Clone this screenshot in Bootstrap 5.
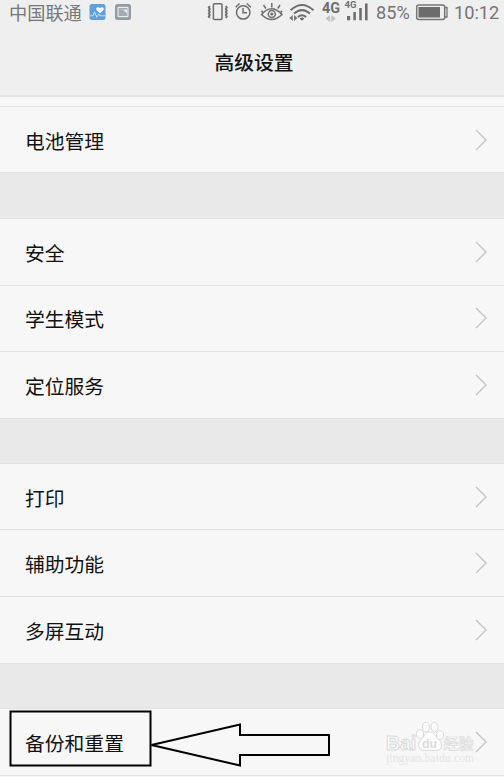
<!DOCTYPE html>
<html lang="zh-CN">
<head>
<meta charset="utf-8">
<meta name="viewport" content="width=device-width, initial-scale=1">
<title>高级设置</title>
<link href="https://cdn.jsdelivr.net/npm/bootstrap@5.3.0/dist/css/bootstrap.min.css" rel="stylesheet">
<style>
body{background:#f7f7f7;font-family:"Noto Sans CJK SC",sans-serif;color:#111;overflow:hidden}
.screen{width:504px;height:777px;overflow:hidden}
.top-area{background:#efefef;height:97px;border-bottom:2px solid #e5e5e5}
.status{height:26px;padding-left:9px;color:#777;font-size:18.2px;line-height:26px}
.status svg{flex:none}
.carrier{line-height:24px}
.num{font-family:Roboto,sans-serif;font-size:18.2px;color:#757575}
.battery-num{width:41px;padding-left:2px}
.clock{width:50px}
.page-title{font-size:19.8px;font-weight:500;line-height:30px;margin-top:21px;padding-left:4px}
.strip{height:10px;border-bottom:1px solid #e2e2e2}
.setting{height:66.6px;padding:2px 16px 0 25px;border-bottom:1px solid #e2e2e2;font-size:19.8px;line-height:30px;background:#f7f7f7}
.setting.first{height:66px}
.setting.last{height:67.4px}
.band{height:45px;background:#e9e9e9;border-bottom:1px solid #e4e4e4}
.band.first{height:46px}
.chev{width:14px;height:22px;margin-top:-2px;fill:none;stroke:#c4c4c4;stroke-width:1.4}
.annot{left:0;top:700px}
.wm{left:380px;top:715px}
</style>
</head>
<body>
<main class="screen position-relative">
<header class="top-area">
<div class="status d-flex align-items-start">
<span class="carrier">中国联通</span>
<svg width="51" height="26" viewBox="82 0 51 26">
<rect x="89.500" y="4" width="16" height="16" rx="2.500" fill="#609fdb"/>
<path d="M100 13.300l-3.400-3.300c-1.500-2.400 1.700-4 3.400-1.700 1.700-2.300 4.900-.7 3.400 1.700z" fill="#fff"/>
<path d="M90 15.800h3l1.600-4 2.200 5.500 2-3.500 1.200 2h5" fill="none" stroke="#c6e0f6"/>
<rect x="115" y="4" width="16" height="16" rx="2.500" fill="#929ba3"/>
<rect x="118" y="7.300" width="10" height="9.400" rx=".8" fill="#a3abb1" stroke="#e6e8e9" stroke-width="1.200"/>
<path d="M119.500 9.500l4 .5 3.500 3.500v-4z" fill="#e6e8e9"/>
</svg>
<svg class="ms-auto" width="170" height="26" viewBox="204 0 170 26" fill="none" stroke="#6e6e6e" stroke-width="1.500">
<rect x="213.400" y="3.800" width="8.600" height="15.600" rx="1"/>
<path d="M209.800 6l-1 1.500 1 1.500-1 1.500 1 1.500-1 1.500 1 1.500-1 1.500 1 1.500M225.800 6l1 1.500-1 1.500 1 1.500-1 1.500 1 1.500-1 1.500 1 1.500-1 1.500" stroke-width="1.900"/>
<circle cx="243.200" cy="12.400" r="6.700"/><path d="M243 8v4.800h4M235.600 7.200l4-3.700M246.800 3.500l4 3.700"/>
<path d="M261.500 14.500q10-11.500 20.500 0q-10.500 10-20.500 0z"/><circle cx="271.800" cy="14" r="3.500"/><circle cx="271.800" cy="14" r=".8" fill="#6e6e6e"/>
<path d="M271.800 7.500V3M265.800 8.500l-2.200-3.500M277.800 8.500l2.200-3.500M261.500 10.800l1.500 2M282 10.800l-1.500 2"/>
<path d="M290.500 10.200q11.500-10.500 23 0M294 13.600q8-7 16 0M297.800 17q4.200-3.600 8.400 0" stroke-width="2"/>
<path d="M302 20.800l-2.400-2.300q2.400-1.900 4.800 0z" fill="#6e6e6e" stroke="none"/>
<path d="M292.800 15v6l-3.500-3zM294 15v6l3.500-3z" fill="#777" stroke="none"/>
<path d="M330 15v7l-4.500-3.500zM331.300 15v7l4.500-3.500z" fill="#c2c2c2" stroke="none"/>
<g fill="#6e6e6e" stroke="none" font-family="Roboto" font-weight="700"><text x="322" y="13.200" font-size="15.500" textLength="18" lengthAdjust="spacingAndGlyphs">4G</text><text x="344.500" y="8" font-size="9.500" textLength="12" lengthAdjust="spacingAndGlyphs">4G</text>
<rect x="347" y="16" width="3.200" height="4.300"/><rect x="353.300" y="12" width="2.600" height="8.300"/><rect x="359.200" y="8" width="2.600" height="12.300"/><rect x="365" y="3.500" width="2.600" height="16.800"/></g>
</svg>
<span class="num battery-num">85%</span>
<svg width="39" height="26" viewBox="415 0 39 26"><rect x="416.700" y="5" width="28" height="14.500" rx="2" fill="none" stroke="#757575" stroke-width="1.500"/><path d="M445 7.500h2v9.500h-2" fill="none" stroke="#757575" stroke-width="1.300"/><rect x="418.500" y="7" width="21.500" height="10.500" fill="#6c6c6c"/></svg>
<span class="num clock">10:12</span>
</div>
<h1 class="page-title text-center mb-0">高级设置</h1>
</header>
<div class="strip"></div>
<section>
<div class="setting first d-flex align-items-center justify-content-between">电池管理<svg class="chev" viewBox="0 0 14 22"><path d="M2 1l10 10L2 21"/></svg></div>
<div class="band first"></div>
<div class="setting d-flex align-items-center justify-content-between">安全<svg class="chev" viewBox="0 0 14 22"><path d="M2 1l10 10L2 21"/></svg></div>
<div class="setting d-flex align-items-center justify-content-between">学生模式<svg class="chev" viewBox="0 0 14 22"><path d="M2 1l10 10L2 21"/></svg></div>
<div class="setting d-flex align-items-center justify-content-between">定位服务<svg class="chev" viewBox="0 0 14 22"><path d="M2 1l10 10L2 21"/></svg></div>
<div class="band"></div>
<div class="setting d-flex align-items-center justify-content-between">打印<svg class="chev" viewBox="0 0 14 22"><path d="M2 1l10 10L2 21"/></svg></div>
<div class="setting d-flex align-items-center justify-content-between">辅助功能<svg class="chev" viewBox="0 0 14 22"><path d="M2 1l10 10L2 21"/></svg></div>
<div class="setting d-flex align-items-center justify-content-between">多屏互动<svg class="chev" viewBox="0 0 14 22"><path d="M2 1l10 10L2 21"/></svg></div>
<div class="band"></div>
<div class="setting last d-flex align-items-center justify-content-between">备份和重置<svg class="chev" viewBox="0 0 14 22"><path d="M2 1l10 10L2 21"/></svg></div>
</section>
<svg class="annot position-absolute" width="340" height="77" viewBox="0 700 340 77" fill="none" stroke="#000" stroke-width="2">
<rect x="10.500" y="711.500" width="140" height="54"/>
<path d="M151.500 745L240 724.500V735H329V755H240V765.500z"/>
</svg>
<svg class="wm position-absolute" width="100" height="58" viewBox="380 715 100 58" fill="#fcfcfc" stroke="#dadada" stroke-width="1">
<ellipse cx="420" cy="734" rx="3.500" ry="4.300"/><ellipse cx="426" cy="727" rx="3.500" ry="4.800"/><ellipse cx="434.500" cy="727" rx="3.500" ry="4.800"/><ellipse cx="440" cy="735" rx="3.500" ry="4.300"/>
<path d="M429.500 732c-5 0-5 4-8 7-5 5-3 12 3 11.500h11c7 .5 8-7 3-11.500-4-3-4-7-9-7z"/>
<g font-family="Liberation Sans"><text x="386" y="749.500" font-size="20" font-weight="700" textLength="30" lengthAdjust="spacingAndGlyphs">Bai</text><text x="422" y="748" font-size="13.500" fill="#dcdcdc" stroke="none" font-weight="700" textLength="15" lengthAdjust="spacingAndGlyphs">du</text></g>
<text x="443.500" y="749" font-family="Noto Sans CJK SC" font-size="15" font-weight="500" stroke-width=".7">经验</text>
<text x="386" y="762" font-family="Liberation Serif" font-size="11.500" fill="#e6e6e6" stroke="none" textLength="88">jingyan.baidu.com</text>
</svg>
</main>
<script src="https://cdn.jsdelivr.net/npm/bootstrap@5.3.0/dist/js/bootstrap.bundle.min.js"></script>
</body>
</html>
